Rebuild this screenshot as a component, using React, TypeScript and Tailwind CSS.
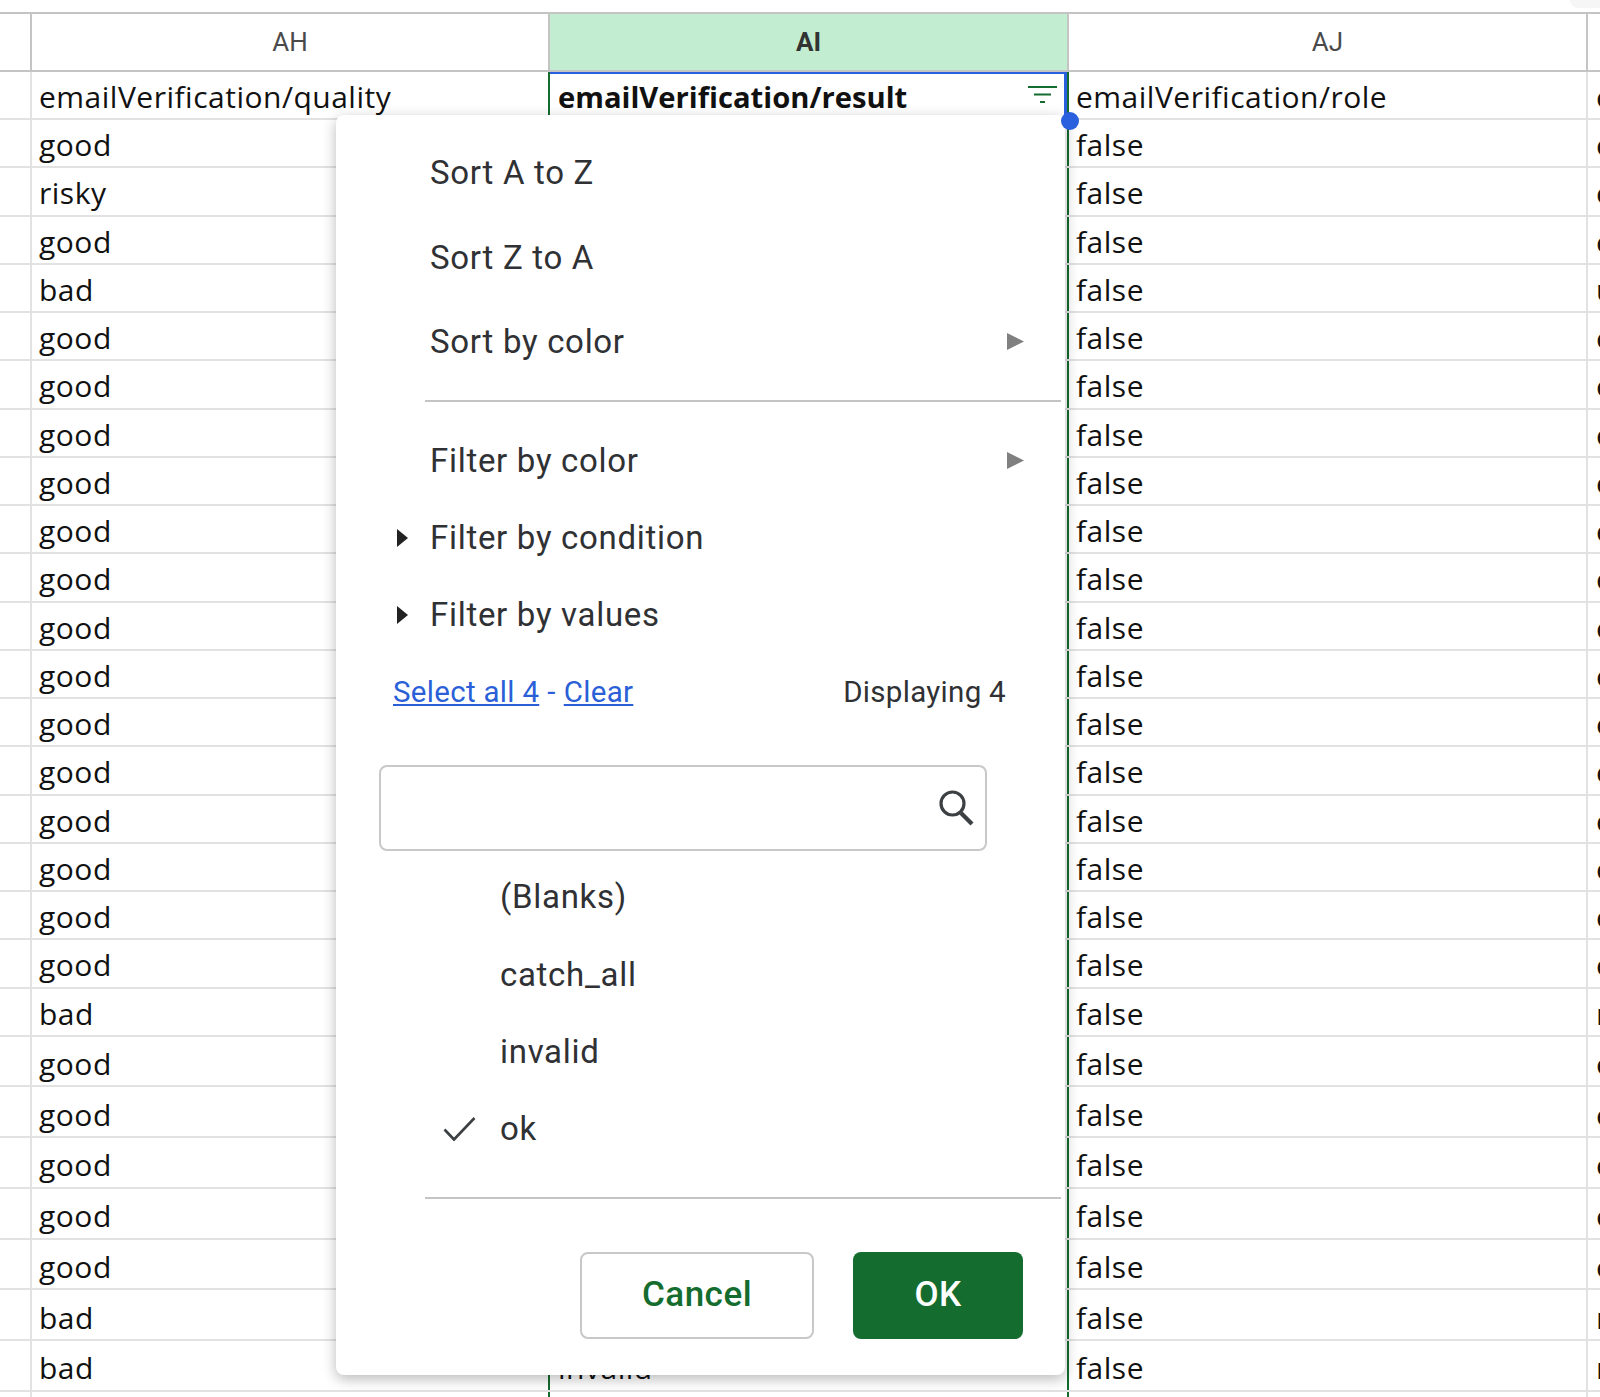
import { ReactNode } from "react";

const quality = [
  "good", "risky", "good", "bad", "good", "good", "good", "good", "good", "good",
  "good", "good", "good", "good", "good", "good", "good", "good", "bad", "good",
  "good", "good", "good", "good", "bad", "bad",
];

function nextCol(q: string, i: number) {
  if (i === 3) return "u";
  return q === "bad" ? "r" : "e";
}

function HeaderCell({ label, active, width }: { label: string; active?: boolean; width: string }) {
  return (
    <div
      className={`${width} flex items-center justify-center border-r-2 border-[#c4c4c4] text-[26px] font-['Roboto',sans-serif] ${
        active ? "bg-[#c3edd0] font-bold text-[#333333]" : "text-[#4a4a4a]"
      }`}
    >
      {label}
    </div>
  );
}

function Row({ height, ah, ai, aj, ak, tall }: { height: string; ah?: string; ai?: ReactNode; aj?: string; ak?: string; tall?: boolean }) {
  const pt = tall ? "pt-[5px]" : "pt-[3px]";
  return (
    <div className={`${height} flex border-b-2 border-[#e2e2e2] text-[30px] tracking-[0.5px] text-[#111111]`}>
      <div className="w-[32px] border-r-2 border-[#e2e2e2]" />
      <div className={`w-[518px] flex items-center border-r-2 border-[#146c2e] pl-[7px] ${pt} whitespace-nowrap`}>{ah}</div>
      <div className={`w-[519px] flex items-center border-r-2 border-[#146c2e] pl-2 ${pt} whitespace-nowrap overflow-hidden`}>{ai}</div>
      <div className={`w-[519px] flex items-center border-r-2 border-[#e2e2e2] pl-[7px] ${pt} whitespace-nowrap`}>{aj}</div>
      <div className={`flex-1 flex items-center pl-2 ${pt} overflow-hidden`}>{ak}</div>
    </div>
  );
}

function MenuItem({ label, height, caret, submenu }: { label: string; height: string; caret?: boolean; submenu?: boolean }) {
  return (
    <div className={`${height} relative flex items-center pl-[94px] pr-[41px]`}>
      {caret && (
        <svg className="absolute left-[61px] top-1/2 -translate-y-1/2" width="11" height="18" viewBox="0 0 11 18">
          <path d="M0 0 L11 9 L0 18 Z" fill="#222222" />
        </svg>
      )}
      <span>{label}</span>
      {submenu && (
        <svg className="ml-auto" width="17" height="17" viewBox="0 0 17 17">
          <path d="M0 0 L17 8.5 L0 17 Z" fill="#808080" />
        </svg>
      )}
    </div>
  );
}

function ValueItem({ label, checked }: { label: string; checked?: boolean }) {
  return (
    <div className="h-[77.3px] relative flex items-center pl-[164px]">
      {checked && (
        <svg className="absolute left-[107px] top-1/2 -translate-y-1/2" width="33" height="25" viewBox="0 0 33 25" fill="none">
          <path d="M1.5 13 L11 23 L31.5 1.5" stroke="#3c4043" strokeWidth="2.6" />
        </svg>
      )}
      <span>{label}</span>
    </div>
  );
}

function FilterMenu() {
  return (
    <div className="absolute left-[336px] top-[115px] z-10 w-[729px] h-[1260px] rounded-lg bg-white pt-[15px] shadow-[0_4px_14px_rgba(0,0,0,0.28)] font-['Roboto',sans-serif] text-[33px] tracking-[0.7px] text-[#303134]">
      <MenuItem label="Sort A to Z" height="h-[85px]" />
      <MenuItem label="Sort Z to A" height="h-[84.5px]" />
      <MenuItem label="Sort by color" height="h-[84px]" submenu />
      <div className="ml-[89px] mr-1 mt-[16px] h-[2px] bg-[#c4c4c4]" />
      <div className="mt-[20px]">
        <MenuItem label="Filter by color" height="h-[77.5px]" submenu />
        <MenuItem label="Filter by condition" height="h-[77px]" caret />
        <MenuItem label="Filter by values" height="h-[77px]" caret />
      </div>
      <div className="mt-[19px] h-10 flex items-center pl-[57px] pr-[59px] text-[29.5px] tracking-[0.3px]">
        <span className="underline text-[#2a5fd8]">Select all 4</span>
        <span className="mx-2 text-[#2a5fd8]">-</span>
        <span className="underline text-[#2a5fd8]">Clear</span>
        <span className="ml-auto">Displaying 4</span>
      </div>
      <div className="mt-[52.5px] ml-[43px] w-[608px] h-[86px] flex items-center justify-end rounded-lg border-2 border-[#c8c8c8] pr-[11px]">
        <svg width="36" height="38" viewBox="0 0 36 38" fill="none">
          <circle cx="14.5" cy="14.5" r="11.5" stroke="#3c4043" strokeWidth="3.2" />
          <path d="M23 24 L34 35" stroke="#3c4043" strokeWidth="4.2" />
        </svg>
      </div>
      <div className="mt-[8px]">
        <ValueItem label="(Blanks)" />
        <ValueItem label="catch_all" />
        <ValueItem label="invalid" />
        <ValueItem label="ok" checked />
      </div>
      <div className="ml-[89px] mr-1 mt-[29px] h-[2px] bg-[#c4c4c4]" />
      <div className="mt-[53px] flex justify-end gap-[39px] pr-[42px] font-medium text-[35px] tracking-[0.5px]">
        <button className="w-[234px] h-[87px] rounded-lg border-2 border-[#c8c8c8] text-[#146c2e]">Cancel</button>
        <button className="w-[170px] h-[87px] rounded-lg bg-[#146c2e] text-white">OK</button>
      </div>
    </div>
  );
}

export default function App() {
  return (
    <div className="relative w-[1600px] h-[1397px] overflow-hidden bg-white font-['Open_Sans',sans-serif]">
      <div className="absolute right-0 top-0 h-[8px] w-[30px] rounded-bl-2xl bg-[#f6f6f6]" />

      <div className="pt-3">
        <div className="flex h-[60px] border-y-2 border-[#c4c4c4]">
          <div className="w-[32px] border-r-2 border-[#c4c4c4]" />
          <HeaderCell label="AH" width="w-[518px]" />
          <HeaderCell label="AI" width="w-[519px]" active />
          <HeaderCell label="AJ" width="w-[519px]" />
        </div>

        <Row
          height="h-[48px]"
          ah="emailVerification/quality"
          ai={
            <div className="-ml-2 -mt-[3px] h-[49px] w-[517px] flex items-center border-t-[3px] border-r-[3px] border-[#2a5fde] pl-2 pr-[7px] pt-[2px] text-[29.2px] tracking-normal font-bold">
              <span>emailVerification/result</span>
              <svg className="ml-auto -mt-[5px]" width="29" height="18" viewBox="0 0 29 18">
                <path d="M0 1 H29 M6 8.5 H23 M12 16 H17" stroke="#146c2e" strokeWidth="2" />
              </svg>
            </div>
          }
          aj="emailVerification/role"
          ak="e"
        />

        {quality.map((q, i) => (
          <Row
            key={i}
            height={i < 19 ? "h-[48.26px]" : "h-[50.7px]"}
            tall={i >= 19}
            ah={q}
            ai={i === 25 ? "invalid" : undefined}
            aj="false"
            ak={nextCol(q, i)}
          />
        ))}

        <Row height="h-[8px]" />
      </div>

      <FilterMenu />

      <div className="absolute left-[1061px] top-[112px] z-20 h-[18px] w-[18px] rounded-full bg-[#2a5fde]" />
    </div>
  );
}
